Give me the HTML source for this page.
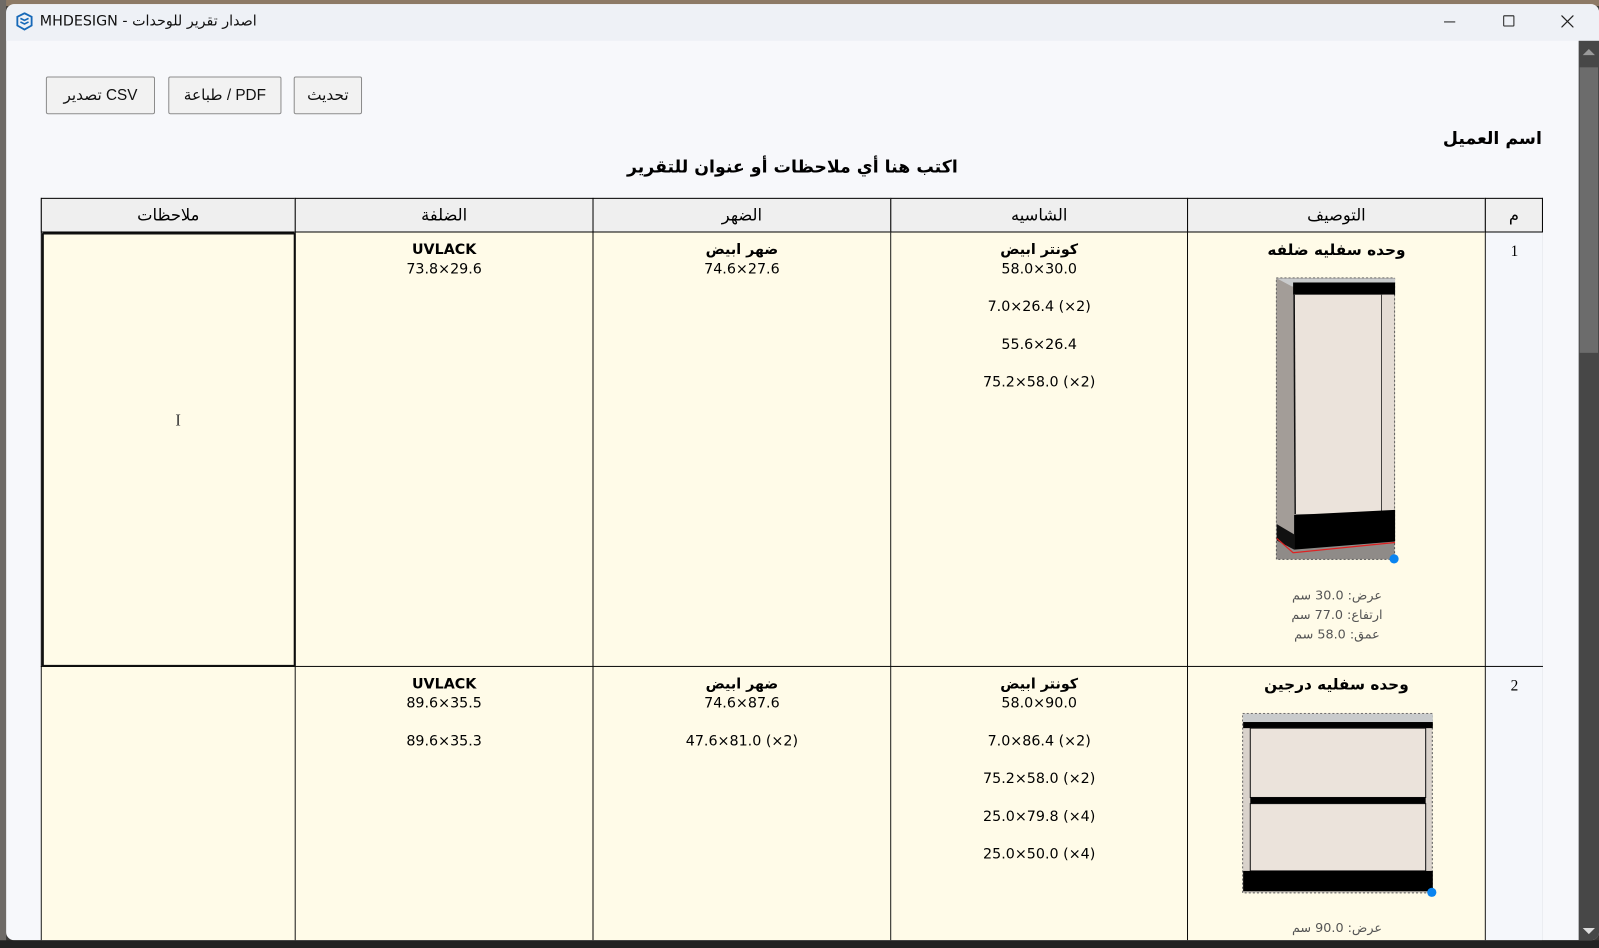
<!DOCTYPE html>
<html><head><meta charset="utf-8">
<style>
*{margin:0;padding:0;box-sizing:border-box}
html,body{width:1599px;height:948px;overflow:hidden;background:#3a3836}
#w{position:absolute;left:0;top:0;width:1568px;height:930px;transform:scale(1.0198);transform-origin:0 0;font-family:"Liberation Sans","DejaVu Sans","Noto Sans CJK SC",sans-serif}
.a{position:absolute}
.win{left:6px;top:4px;width:1562px;height:918px;background:#f7f8fb;border-radius:8px 8px 8px 8px;overflow:hidden}
.tb{left:0;top:0;width:1562px;height:36px;background:#eef1f6}
.btn{position:absolute;top:71px;height:37px;border:1px solid #8c8c8c;border-radius:2px;background:#f2f2f2;font-size:15px;color:#111;text-align:center;line-height:35px}
.t{font-family:"DejaVu Sans","Noto Sans CJK SC",sans-serif;color:#000;text-align:center;direction:rtl}
.hd{position:absolute;top:190px;height:34px;background:#efefef;border:1px solid #000;font-size:16px;line-height:32px;text-align:center;font-family:"DejaVu Sans",sans-serif;direction:rtl}
.c{position:absolute;background:#fffbe8;border-right:1px solid #000;font-size:14px;line-height:19px;text-align:center;font-family:"DejaVu Sans",sans-serif;direction:rtl}
.c b{font-weight:bold}
.sp{height:18px}
.lt{direction:ltr;unicode-bidi:isolate}
</style></head><body>
<div id="w">
<div class="a" style="left:0;top:0;width:1568px;height:6px;background:#8d7a66"></div>
<div class="a" style="left:0;top:0;width:6px;height:930px;background:#6e6a66"></div>
<div class="a win">
 <div class="a tb"></div>
 <svg class="a" style="left:9px;top:8px" width="18" height="18" viewBox="0 0 18 18"><path d="M9 1 L16 4.5 V13 L9 17 L2 13 V4.5 Z" fill="none" stroke="#1769b8" stroke-width="1.8"/><path d="M5 6 L9 8 L13 6 M5 9.5 L9 11.5 L13 9.5" fill="none" stroke="#1769b8" stroke-width="1.6"/></svg>
 <div class="a" style="left:33px;top:9px;font-size:14px;color:#111;font-family:'DejaVu Sans',sans-serif">MHDESIGN - اصدار تقرير للوحدات</div>
 <div class="a" style="left:1410px;top:17px;width:11px;height:1px;background:#222"></div>
 <div class="a" style="left:1468px;top:11px;width:11px;height:11px;border:1.3px solid #222;border-radius:1px"></div>
 <svg class="a" style="left:1525px;top:11px" width="12" height="12"><path d="M0 0L12 12M12 0L0 12" stroke="#222" stroke-width="1.2"/></svg>
 <!-- scrollbar -->
 <div class="a" style="left:1542px;top:36px;width:20px;height:882px;background:#474747"></div>
 <div class="a" style="left:1543px;top:62px;width:18px;height:280px;background:#6c6c6c"></div>
 <div class="a" style="left:1546px;top:44px;width:0;height:0;border-left:6px solid transparent;border-right:6px solid transparent;border-bottom:6px solid #9a9a9a"></div>
 <div class="a" style="left:1546px;top:906px;width:0;height:0;border-left:6px solid transparent;border-right:6px solid transparent;border-top:6px solid #ddd"></div>

 <div class="btn" style="left:39px;width:107px">تصدير CSV</div>
 <div class="btn" style="left:159px;width:111px">طباعة / PDF</div>
 <div class="btn" style="left:282px;width:67px">تحديث</div>

 <div class="a t" style="right:56px;top:122px;font-size:17px;font-weight:bold">اسم العميل</div>
 <div class="a t" style="left:0;width:1542px;top:150px;font-size:17px;font-weight:bold">اكتب هنا أي ملاحظات أو عنوان للتقرير</div>

 <!-- table -->
 <div class="a" style="left:34px;top:190px;width:1473px;height:728px;border-left:1px solid #000;border-right:1px solid #000"></div>
 <div class="hd" style="left:34px;width:250px">ملاحظات</div>
 <div class="hd" style="left:283px;width:293px">الضلفة</div>
 <div class="hd" style="left:575px;width:293px">الضهر</div>
 <div class="hd" style="left:867px;width:292px">الشاسيه</div>
 <div class="hd" style="left:1158px;width:293px">التوصيف</div>
 <div class="hd" style="left:1450px;width:57px">م</div>

 <!-- row1 -->
 <div class="c" style="left:35px;top:224px;width:249px;height:426px;border:2px solid #111;border-radius:2px"></div>
 <div class="c" style="left:284px;top:224px;width:292px;height:426px;padding-top:8px"><b>UVLACK</b><div class="lt">73.8×29.6</div></div>
 <div class="c" style="left:576px;top:224px;width:292px;height:426px;padding-top:8px"><b>ضهر ابيض</b><div class="lt">74.6×27.6</div></div>
 <div class="c" style="left:868px;top:224px;width:291px;height:426px;padding-top:8px"><b>كونتر ابيض</b><div class="lt">58.0×30.0</div><div class="sp"></div><div class="lt">7.0×26.4 (×2)</div><div class="sp"></div><div class="lt">55.6×26.4</div><div class="sp"></div><div class="lt">75.2×58.0 (×2)</div></div>
 <div class="c" style="left:1159px;top:224px;width:292px;height:426px;padding-top:8px"><b style="font-size:15px">وحده سفليه ضلفه</b>
  <svg class="a" style="left:86px;top:44px" width="122" height="284" viewBox="0 0 122 284">
   <rect x="0.5" y="0.5" width="116" height="276" fill="#8f8b88" stroke="#555" stroke-dasharray="2 2"/>
   <rect x="1" y="1" width="116" height="8" fill="#c9cbcc"/>
   <polygon points="1,1 18,10 18,260 1,250" fill="#a39d98"/>
   <rect x="17" y="5" width="100" height="12" fill="#000"/>
   <rect x="18" y="17" width="98" height="215" fill="#ebe3db"/>
   <line x1="18" y1="17" x2="19" y2="232" stroke="#111" stroke-width="1.5"/>
   <line x1="104" y1="17" x2="104" y2="232" stroke="#111" stroke-width="1.5"/>
   <rect x="104" y="17" width="12" height="215" fill="#e4dcd4"/>
   <polygon points="18,233 117,228 117,259 18,267" fill="#000"/>
   <polygon points="1,242 18,252 18,267 1,258" fill="#111"/>
   <path d="M1 256 L17 270 L117 260" stroke="#d22" stroke-width="1.2" fill="none"/>
   <circle cx="116" cy="276" r="4.5" fill="#0a84f0"/>
  </svg>
  <div class="a" style="left:0;width:292px;top:346px;font-size:12.5px;line-height:19px;color:#555"><div>عرض: 30.0 سم</div><div>ارتفاع: 77.0 سم</div><div>عمق: 58.0 سم</div></div>
 </div>
 <div class="c" style="left:1451px;top:224px;width:56px;height:426px;background:#f5f7fb;border-right:none;padding-top:10px;font-family:'Liberation Serif',serif;font-size:15px">1</div>
 <div class="a" style="left:34px;top:649px;width:1473px;height:1px;background:#000"></div>
 <div class="a" style="left:283px;top:224px;width:1px;height:694px;background:#000"></div>

 <!-- row2 -->
 <div class="c" style="left:35px;top:650px;width:249px;height:268px"></div>
 <div class="c" style="left:284px;top:650px;width:292px;height:268px;padding-top:8px"><b>UVLACK</b><div class="lt">89.6×35.5</div><div class="sp"></div><div class="lt">89.6×35.3</div></div>
 <div class="c" style="left:576px;top:650px;width:292px;height:268px;padding-top:8px"><b>ضهر ابيض</b><div class="lt">74.6×87.6</div><div class="sp"></div><div class="lt">47.6×81.0 (×2)</div></div>
 <div class="c" style="left:868px;top:650px;width:291px;height:268px;padding-top:8px"><b>كونتر ابيض</b><div class="lt">58.0×90.0</div><div class="sp"></div><div class="lt">7.0×86.4 (×2)</div><div class="sp"></div><div class="lt">75.2×58.0 (×2)</div><div class="sp"></div><div class="lt">25.0×79.8 (×4)</div><div class="sp"></div><div class="lt">25.0×50.0 (×4)</div></div>
 <div class="c" style="left:1159px;top:650px;width:292px;height:268px;padding-top:8px"><b style="font-size:15px">وحده سفليه درجين</b>
  <svg class="a" style="left:53px;top:45px" width="192" height="182" viewBox="0 0 192 182">
   <rect x="0.5" y="0.5" width="186" height="176" fill="#d9d2cb" stroke="#555" stroke-dasharray="2 2"/>
   <rect x="1" y="1" width="186" height="8" fill="#c9cbcc"/>
   <rect x="1" y="9" width="186" height="6" fill="#000"/>
   <rect x="8" y="15" width="172" height="68" fill="#ebe3db" stroke="#111" stroke-width="1"/>
   <rect x="8" y="83" width="172" height="6" fill="#000"/>
   <rect x="8" y="89" width="172" height="66" fill="#ebe3db" stroke="#111" stroke-width="1"/>
   <rect x="1" y="155" width="186" height="20" fill="#000"/>
   <circle cx="186" cy="176" r="4.5" fill="#0a84f0"/>
  </svg>
  <div class="a" style="left:0;width:292px;top:246px;font-size:12.5px;line-height:19px;color:#555"><div>عرض: 90.0 سم</div><div>ارتفاع: 77.0 سم</div></div>
 </div>
 <div class="c" style="left:1451px;top:650px;width:56px;height:268px;background:#f5f7fb;border-right:none;padding-top:10px;font-family:'Liberation Serif',serif;font-size:15px">2</div>
 <div class="a" style="left:166px;top:400px;font-size:16px;color:#333;font-family:'Liberation Serif',serif">I</div>
</div>
<div class="a" style="left:0;top:922px;width:1568px;height:8px;background:#222"></div>
</div>
</body></html>
